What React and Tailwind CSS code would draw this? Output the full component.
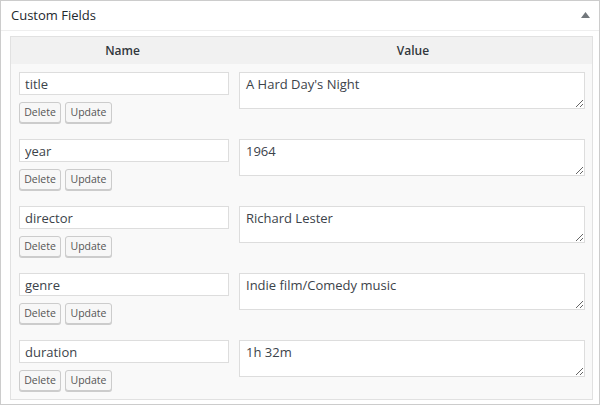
import React from 'react';

const FIELDS = [
  { name: 'title', value: "A Hard Day's Night" },
  { name: 'year', value: '1964' },
  { name: 'director', value: 'Richard Lester' },
  { name: 'genre', value: 'Indie film/Comedy music' },
  { name: 'duration', value: '1h 32m' },
];

function SmallButton({ children, w }) {
  return (
    <button
      type="button"
      className={`h-[21px] ${w} rounded-[3px] border border-[#cccccc] bg-[#f7f7f7] text-[10.5px] leading-none text-[#555555] shadow-[0_1px_0_#cccccc]`}
    >
      {children}
    </button>
  );
}

function FieldRow({ name, value }) {
  return (
    <div className="flex h-[67px] pt-[8px]">
      <div className="w-[223px] pl-[8px]">
        <input
          readOnly
          value={name}
          className="block h-[23px] w-[210px] border border-[#dddddd] bg-white px-[5px] text-[13px] text-[#3c434a] outline-none"
        />
        <div className="mt-[7px] flex gap-[4px]">
          <SmallButton w="w-[42px]">Delete</SmallButton>
          <SmallButton w="w-[47px]">Update</SmallButton>
        </div>
      </div>
      <div className="flex-1 pl-[5px] pr-[7px]">
        <textarea
          readOnly
          value={value}
          className="block h-[37px] w-full border border-[#dddddd] bg-white px-[6px] pt-[1px] text-[13px] leading-[20px] text-[#3c434a] outline-none"
        />
      </div>
    </div>
  );
}

export default function App() {
  return (
    <div className="w-[600px] bg-white font-['Open_Sans',sans-serif]">
      <div className="border border-[#cccccc] bg-white">
        <div className="flex h-[30px] items-center justify-between border-b border-[#eeeeee] pl-[10px] pr-[9px]">
          <span className="text-[13px] text-[#23282d]">Custom Fields</span>
          <svg width="9" height="6" viewBox="0 0 9 6" className="mt-[-2px]">
            <path d="M4.5 0 L9 6 L0 6 Z" fill="#72777c" />
          </svg>
        </div>
        <div className="pb-[4px] pl-[9px] pr-[6px] pt-[5px]">
          <div className="border border-[#e1e1e1] bg-[#f9f9f9]">
            <div className="flex h-[27px] items-center bg-[#f1f1f1] text-[12px] font-semibold text-[#32373c]">
              <div className="w-[223px] text-center">Name</div>
              <div className="flex-1 text-center">Value</div>
            </div>
            {FIELDS.map((f) => (
              <FieldRow key={f.name} name={f.name} value={f.value} />
            ))}
          </div>
        </div>
      </div>
    </div>
  );
}
